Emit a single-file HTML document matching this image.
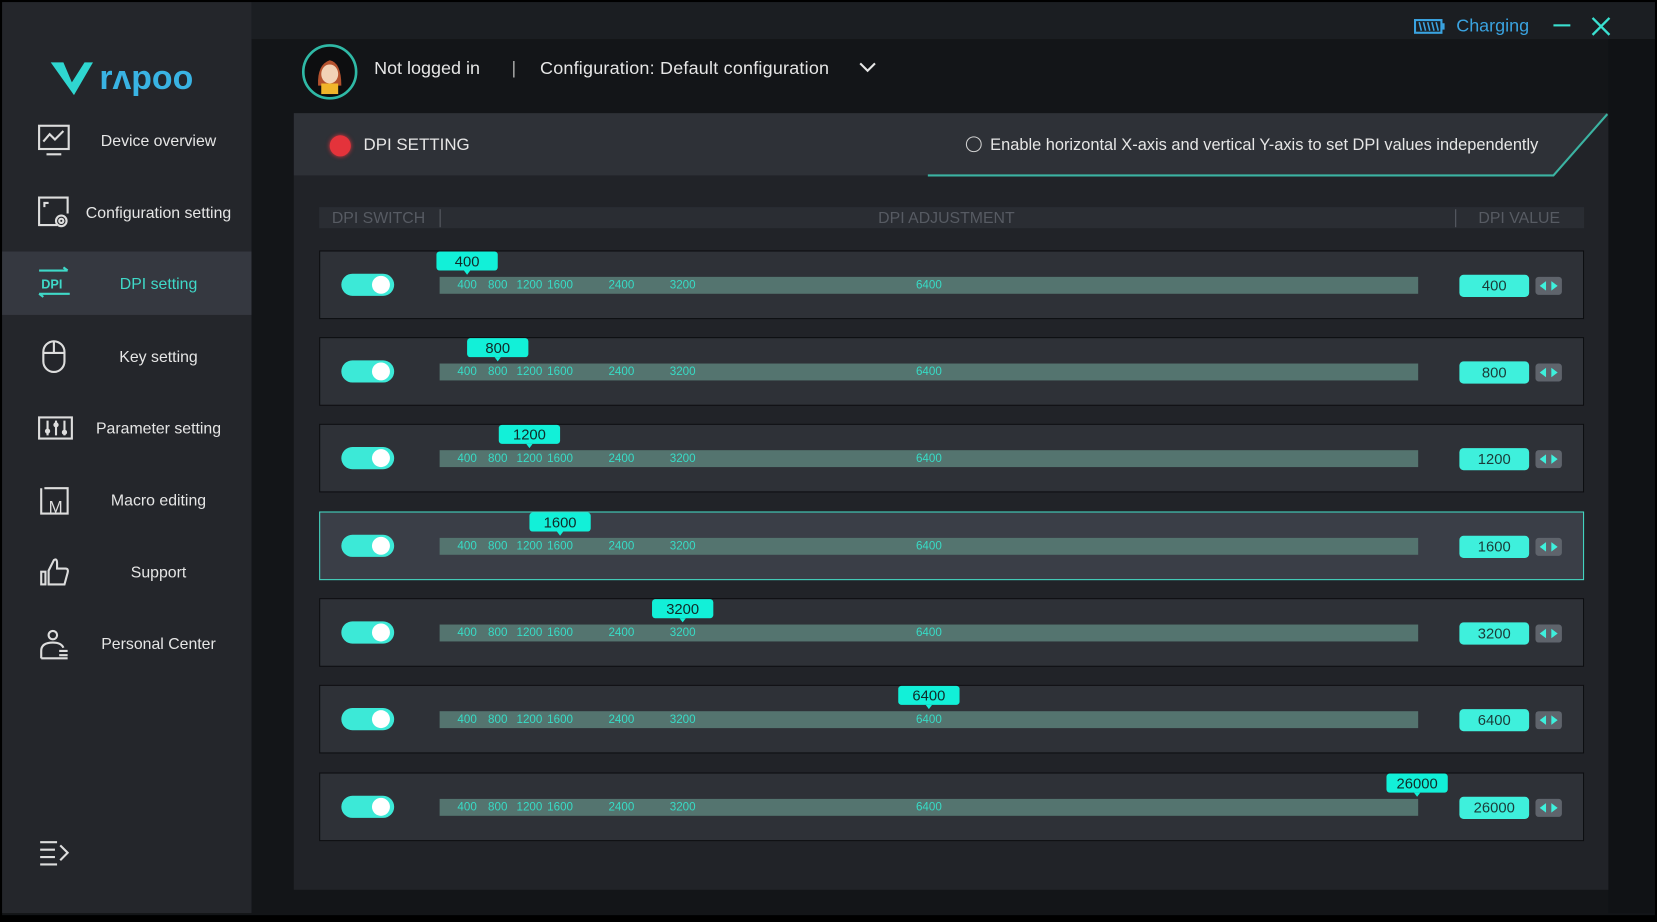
<!DOCTYPE html>
<html><head><meta charset="utf-8"><style>
*{margin:0;padding:0;box-sizing:border-box}
html,body{width:1657px;height:922px;overflow:hidden;background:#000;font-family:"Liberation Sans","DejaVu Sans",sans-serif}
#s{position:absolute;left:0;top:0;width:1568px;height:872px;transform:scale(1.05676);transform-origin:0 0}
.a{position:absolute}
.win{left:2px;top:2px;width:1564px;height:864px;background:#131518}
.side{left:2px;top:2px;width:236px;height:862px;background:#24262b}
.top{left:238px;top:2px;width:1328px;height:35px;background:#1b1e22}
.rstrip{left:1522px;top:37px;width:44px;height:827px;background:#101215}
.nav{position:absolute;left:0;width:236px;height:58px;color:#e6e6e6;font-size:15px}
.nav span{position:absolute;left:148px;top:50%;transform:translate(-50%,-45%);white-space:nowrap}
.nav svg{position:absolute;left:32px;top:12px}
.panel{left:278px;top:107px;width:1244px;height:735px;background:#212328}
.colh{left:302px;top:196px;width:1197px;height:20px;background:#2a2d33;color:#575b63;font-size:15px;line-height:21px}
.row{position:absolute;left:302px;width:1197px;height:65px;background:#2e3137;border:1px solid #0c0d10}
.row.sel{background:#3a3e47;border-color:#43d9c4}
.tg{position:absolute;left:20px;top:21px;width:50px;height:21px;border-radius:11px;background:#3ce9d7}
.tg:after{content:"";position:absolute;right:4px;top:2px;width:17px;height:17px;border-radius:50%;background:#fff}
.tr{position:absolute;left:113px;top:24px;width:926px;height:16px;background:#54746f}
.lb{position:absolute;top:0;font-size:11px;line-height:16px;color:#37dcc6;transform:translateX(-50%)}
.bb{position:absolute;top:0;height:18px;width:58px;background:#12f0d8;border-radius:3px;color:#102a28;font-size:14px;line-height:18px;text-align:center;transform:translateX(-50%)}
.bb:after{content:"";position:absolute;left:50%;bottom:-4px;margin-left:-3px;border:3px solid transparent;border-top:4px solid #12f0d8;border-bottom:0}
.vb{position:absolute;left:1078px;top:22px;width:66px;height:21px;background:#3ef0dc;border-radius:4px;color:#1b3b38;font-size:14px;line-height:21px;text-align:center}
.ar{position:absolute;left:1150px;top:24px;width:25px;height:17px;background:#5f646c;border-radius:3px}
</style></head><body><div id="s">
<div class="a win"></div>
<div class="a top"></div>
<div class="a rstrip"></div>
<div class="a side">
  <svg class="a" style="left:44px;top:52px" width="150" height="40" viewBox="0 0 150 40">
    <path d="M2 5 L14 5 L22 24 L34 5 L42 5 L24 36 Z" fill="#2fd6d0"/>
    <text x="48" y="30" font-size="32" font-weight="bold" fill="#39b3e3" font-family="Liberation Sans,sans-serif" letter-spacing="0">rʌpoo</text>
  </svg>
  <div class="nav" style="top:102px"><svg width="34" height="34" viewBox="0 0 34 34" fill="none" stroke="#ddd" stroke-width="2"><rect x="3" y="3" width="28" height="22"/><path d="M7 18 L13 11 L18 16 L26 8"/><path d="M10 30 H24"/></svg><span>Device overview</span></div>
  <div class="nav" style="top:170px"><svg width="34" height="34" viewBox="0 0 34 34" fill="none" stroke="#ddd" stroke-width="2"><path d="M20 29 H3 V3 H30 V18"/><path d="M8 12 V8 H12"/><circle cx="24" cy="25" r="5"/><circle cx="24" cy="25" r="2"/></svg><span>Configuration setting</span></div>
  <div class="nav" style="top:236px;height:60px;background:#353840;color:#3fd9c8"><svg width="36" height="34" viewBox="0 0 36 34" fill="none" stroke="#3fd9c8" stroke-width="2"><path d="M3 6 H30 M26 3 L30 6"/><path d="M3 28 H32 M7 31 L3 28"/><text x="5" y="23" font-size="12" font-weight="bold" fill="#3fd9c8" stroke="none" font-family="Liberation Sans">DPI</text></svg><span>DPI setting</span></div>
  <div class="nav" style="top:306px"><svg width="34" height="34" viewBox="0 0 34 34" fill="none" stroke="#ddd" stroke-width="2"><rect x="7" y="3" width="20" height="29" rx="10"/><path d="M7 14 H27 M17 3 V14"/></svg><span>Key setting</span></div>
  <div class="nav" style="top:374px"><svg width="36" height="34" viewBox="0 0 36 34" fill="none" stroke="#ddd" stroke-width="2"><rect x="3" y="7" width="31" height="20"/><path d="M11 10V24 M19 10V24 M27 10V24"/><circle cx="11" cy="20" r="1.5"/><circle cx="19" cy="14" r="1.5"/><circle cx="27" cy="21" r="1.5"/></svg><span>Parameter setting</span></div>
  <div class="nav" style="top:442px"><svg width="34" height="34" viewBox="0 0 34 34" fill="none" stroke="#ddd" stroke-width="2"><path d="M5 6 V30 H30 V6 H8"/><text x="12" y="29" font-size="16" fill="#ddd" stroke="none" font-family="Liberation Sans">M</text></svg><span>Macro editing</span></div>
  <div class="nav" style="top:510px"><svg width="34" height="34" viewBox="0 0 34 34" fill="none" stroke="#ddd" stroke-width="2"><rect x="5" y="17" width="4" height="12"/><path d="M12 29 V16 L17 6 Q20 4 20 9 V14 H28 Q31 14 30 18 L27 29 Z"/></svg><span>Support</span></div>
  <div class="nav" style="top:578px"><svg width="34" height="34" viewBox="0 0 34 34" fill="none" stroke="#ddd" stroke-width="2"><circle cx="16" cy="9" r="4"/><path d="M5 31 V24 Q5 16 16 16 Q24 16 26 21"/><path d="M5 31 H22 M22 24 H30 M22 28 H30 M22 31 H30"/></svg><span>Personal Center</span></div>
  <svg class="a" style="left:34px;top:792px" width="30" height="26" viewBox="0 0 30 26" fill="none" stroke="#ddd" stroke-width="2"><path d="M2 3H18 M2 10H16 M2 17H16 M2 24H18 M21 6 L28 13 L21 20"/></svg>
</div>

<svg class="a" style="left:1338px;top:17px" width="30" height="16" viewBox="0 0 30 16"><rect x="1" y="2" width="25" height="12" fill="none" stroke="#3aa3e0" stroke-width="2"/><rect x="27" y="5" width="2" height="6" fill="#3aa3e0"/><path d="M5 4 L7 12 M9 4 L11 12 M13 4 L15 12 M17 4 L19 12 M21 4 L23 12" stroke="#3aa3e0" stroke-width="1.5"/></svg>
<div class="a" style="left:1378px;top:15px;color:#3aa3e0;font-size:17px">Charging</div>
<div class="a" style="left:1470px;top:23px;width:16px;height:2px;background:#3ae0d0"></div>
<svg class="a" style="left:1506px;top:16px" width="18" height="18" viewBox="0 0 18 18"><path d="M1 1L17 17M17 1L1 17" stroke="#3ae0d0" stroke-width="2.2"/></svg>

<svg class="a" style="left:285px;top:41px" width="54" height="54" viewBox="0 0 54 54"><circle cx="27" cy="27" r="25" fill="#0d0e10" stroke="#2fb9a6" stroke-width="2.5"/><path d="M16 40 Q15 20 27 16 Q38 18 38 40 Z" fill="#b5522e"/><ellipse cx="27" cy="29" rx="8" ry="9" fill="#f2d2b6"/><rect x="19" y="38" width="16" height="10" fill="#f1b52a"/></svg>
<div class="a" style="left:354px;top:55px;color:#e6e6e6;font-size:17px">Not logged in</div>
<div class="a" style="left:484px;top:55px;color:#aaa;font-size:17px">|</div>
<div class="a" style="left:511px;top:55px;color:#e6e6e6;font-size:17px;letter-spacing:0.2px">Configuration: Default configuration</div>
<svg class="a" style="left:812px;top:58px" width="18" height="12" viewBox="0 0 18 12"><path d="M2 2L9 9L16 2" fill="none" stroke="#e6e6e6" stroke-width="2"/></svg>

<div class="a panel"></div>
<svg class="a" style="left:278px;top:107px" width="1244" height="61" viewBox="0 0 1244 61"><path d="M0 0H1244L1192 59H0Z" fill="#2e3137"/><path d="M600 59H1192L1243 1" fill="none" stroke="#3bb3a2" stroke-width="2"/></svg>
<div class="a" style="left:312px;top:128px;width:20px;height:20px;border-radius:50%;background:#e4333b;box-shadow:0 0 4px #e4333b"></div>
<div class="a" style="left:344px;top:129px;color:#e6e6e6;font-size:16px">DPI SETTING</div>
<div class="a" style="left:914px;top:129px;width:15px;height:15px;border-radius:50%;border:1.5px solid #cfcfcf"></div>
<div class="a" style="left:937px;top:129px;color:#e6e6e6;font-size:15.5px">Enable horizontal X-axis and vertical Y-axis to set DPI values independently</div>

<div class="a colh"><span class="a" style="left:12px">DPI SWITCH</span><span class="a" style="left:114px;top:2px;width:1px;height:17px;background:#5a5e66"></span><span class="a" style="left:529px">DPI ADJUSTMENT</span><span class="a" style="left:1075px;top:2px;width:1px;height:17px;background:#5a5e66"></span><span class="a" style="left:1097px">DPI VALUE</span></div>

<div id="rows"></div>
<script>
var labels=[[400,441],[800,470],[1200,500],[1600,529],[2400,587],[3200,645],[6400,878]];
var vals=[[400,441],[800,470],[1200,500],[1600,529],[3200,645],[6400,878],[26000,1340]];
var tops=[237,319,401,484,566,648,731],h="";
for(var i=0;i<7;i++){
 var lab="";labels.forEach(function(l){lab+='<div class="lb" style="left:'+(l[1]-415)+'px">'+l[0]+'</div>'});
 h+='<div class="row'+(i==3?' sel':'')+'" style="top:'+tops[i]+'px"><div class="tg"></div><div class="tr">'+lab+'</div>'+
 '<div class="bb" style="left:'+(vals[i][1]-302)+'px">'+vals[i][0]+'</div>'+
 '<div class="vb">'+vals[i][0]+'</div><div class="ar"><svg width="25" height="17" viewBox="0 0 25 17"><path d="M4 8.5L10 4V13Z M21 8.5L15 4V13Z" fill="#3ef0dc"/></svg></div></div>';
}
document.getElementById("rows").innerHTML=h;
</script>
</div></body></html>
